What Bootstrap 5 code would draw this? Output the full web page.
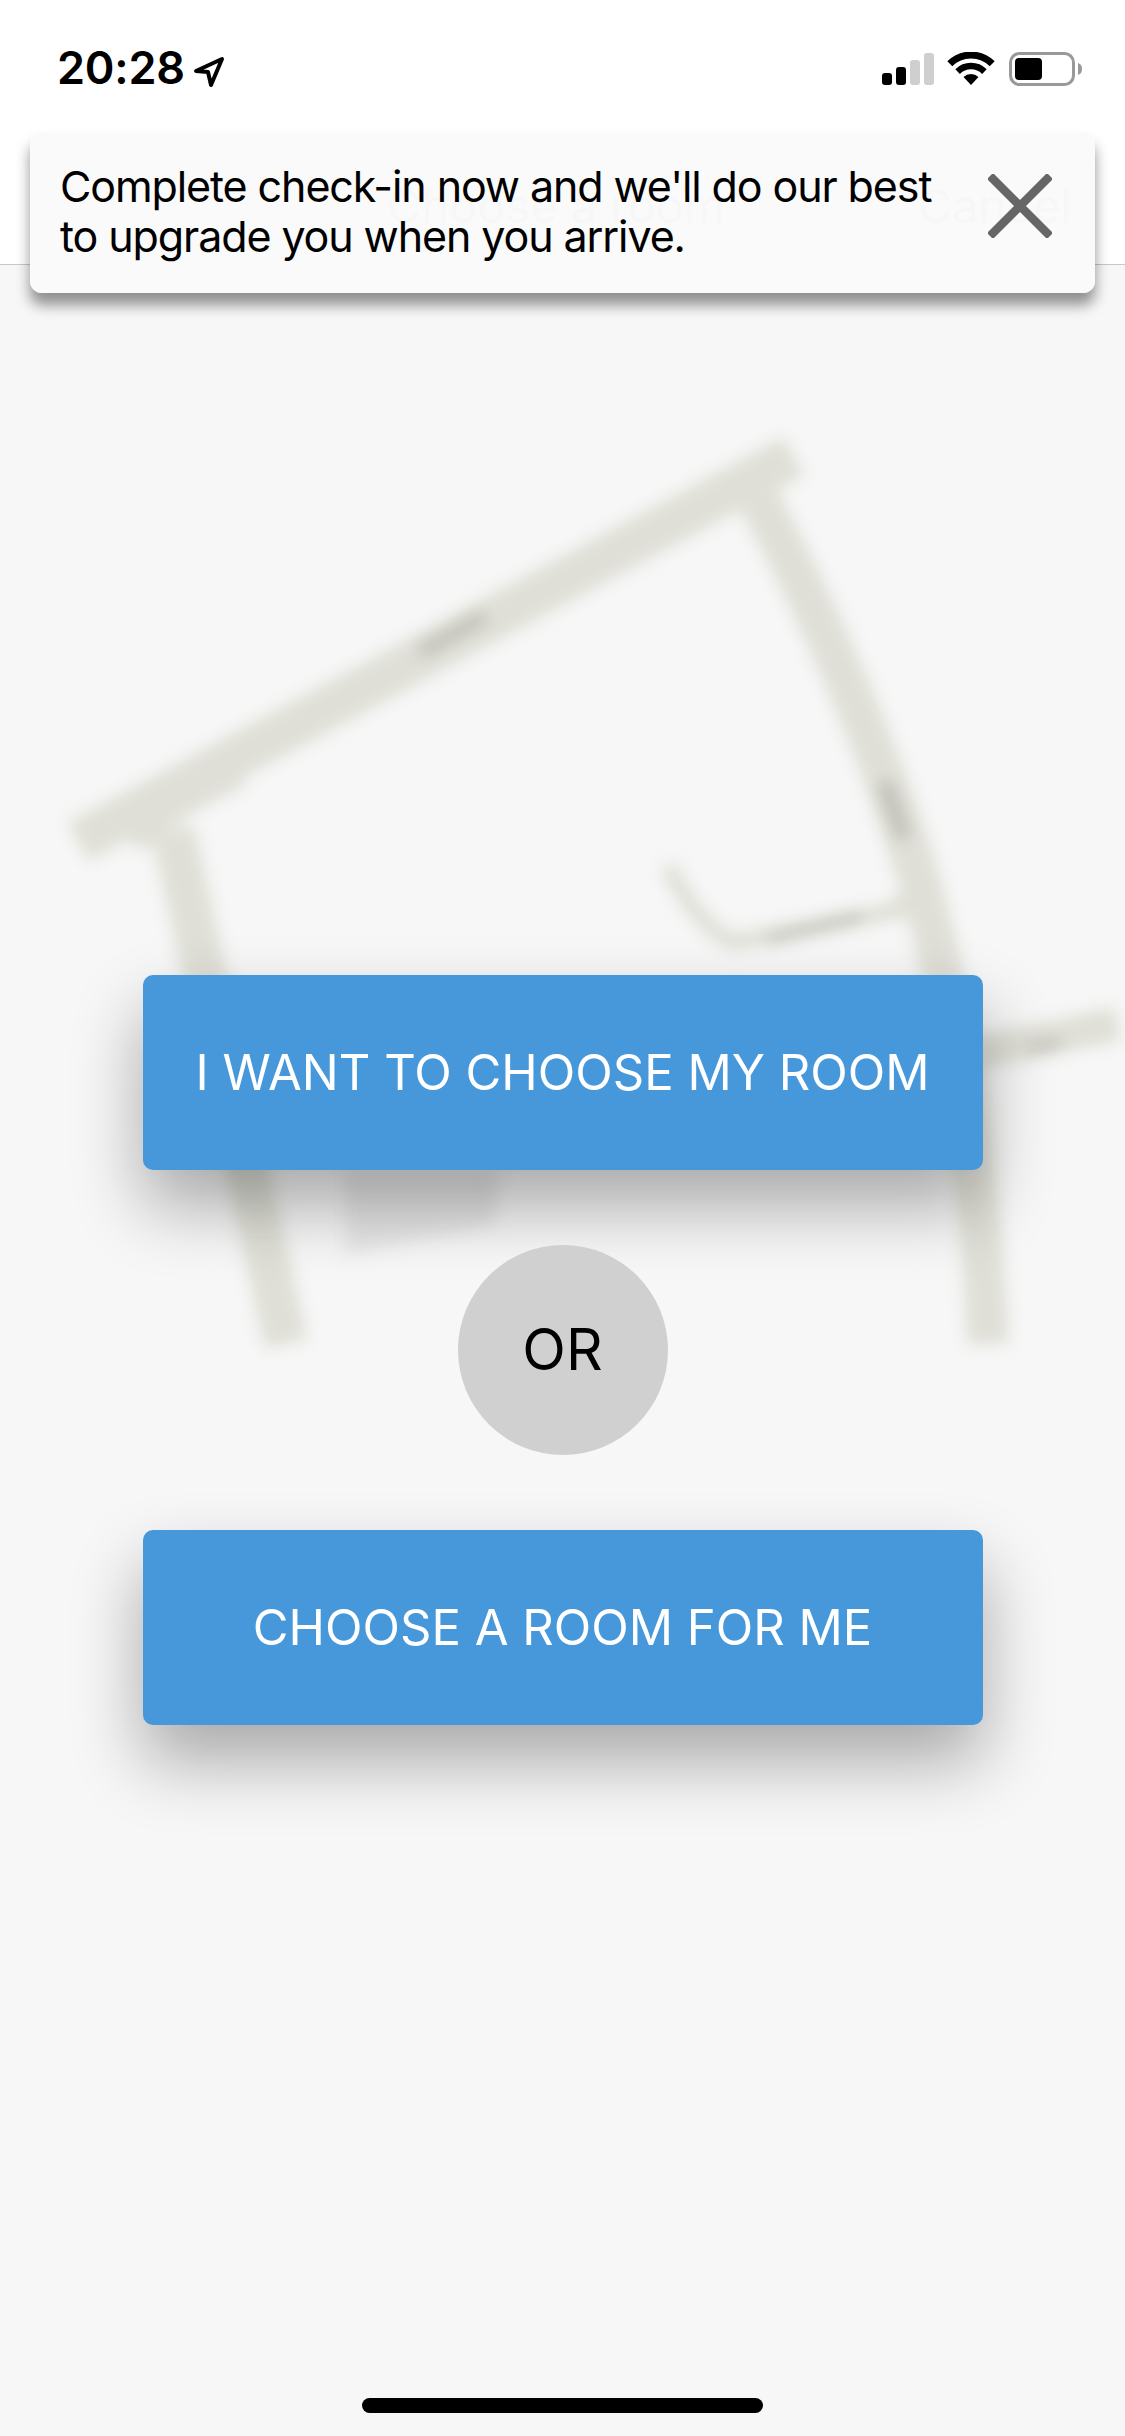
<!DOCTYPE html>
<html lang="en">
<head>
<meta charset="utf-8">
<title>Choose a room</title>
<link rel="stylesheet" href="https://cdn.jsdelivr.net/npm/bootstrap@5.3.0/dist/css/bootstrap.min.css">
<style>
html,body{margin:0;background:#f7f7f7;}
body{font-family:Inter,"Liberation Sans",sans-serif;color:#000;}
.phone{width:1125px;height:2436px;overflow:hidden;position:relative;background:#f7f7f7;}
.status-strip{height:132px;background:#fff;padding:52px 43px 0 57px;align-items:flex-start;}
.clock{font-size:45px;line-height:48px;font-weight:600;letter-spacing:-.2px;margin-top:-7px;}
.clock-row{margin-top:-1px;}
.nav-strip{height:133px;background:#fff;border-bottom:1px solid #c9c9c9;padding:46px 53px 0 387px;font-size:47px;line-height:56px;color:#9a9a9a;}
.floor{position:absolute;left:0;top:0;width:1125px;height:1500px;filter:blur(8px);}
.notice{position:absolute;left:30px;top:132px;width:1065px;height:161px;background:rgba(250,250,250,.97);border-radius:12px;box-shadow:0 12px 14px rgba(0,0,0,.42);padding:29px 43px 0 30px;z-index:5;}
.notice-text{font-size:43px;line-height:50px;margin:0;letter-spacing:-1.1px;white-space:nowrap;}
.notice-close{background:none;border:0;padding:0;width:64px;height:64px;margin-top:13px;line-height:0;}
.stage{position:relative;padding-top:710px;}
.pick{width:840px;height:195px;background:#4698da;border:0;border-radius:10px;color:#fff;font-size:49px;box-shadow:0 36px 70px rgba(0,0,0,.32);}
.pick:hover,.pick:active{background:#4698da;color:#fff;}
.or-disc{width:210px;height:210px;margin:75px 0 75px;background:#d0d0d0;font-size:57px;}
.home-bar{position:absolute;left:362px;top:2398px;width:401px;height:15px;background:#000;}
</style>
</head>
<body>
<div class="phone">
  <div class="d-flex justify-content-between status-strip">
    <div class="d-flex align-items-center gap-2 clock-row">
      <span class="clock">20:28</span>
      <svg width="32" height="32" viewBox="0 0 32 32"><path d="M3 15 L29 3 L18 29 L15 16 Z" fill="none" stroke="#000" stroke-width="4" stroke-linejoin="round"/></svg>
    </div>
    <div class="d-flex align-items-start">
      <svg width="200" height="36" viewBox="882 52 200 36">
        <rect x="882" y="73" width="10" height="12" rx="3" fill="#000"/>
        <rect x="896" y="67" width="10" height="18" rx="3" fill="#000"/>
        <rect x="910" y="60" width="10" height="25" rx="3" fill="#cfcfcf"/>
        <rect x="924" y="53" width="10" height="32" rx="3" fill="#cfcfcf"/>
        <g transform="translate(948,52)">
          <path d="M1.8 11.8 A30 30 0 0 1 44.2 11.8" fill="none" stroke="#000" stroke-width="7"/>
          <path d="M9.6 19.6 A19 19 0 0 1 36.4 19.6" fill="none" stroke="#000" stroke-width="6.5"/>
          <path d="M23 33 L15.5 25 A11 11 0 0 1 30.5 25 Z" fill="#000"/>
        </g>
        <rect x="1010.5" y="53.5" width="63" height="31" rx="9" fill="#fff" stroke="#999" stroke-width="3"/>
        <rect x="1015" y="58" width="27" height="22" rx="4" fill="#000"/>
        <path d="M1078 63 C1081 64 1082 66 1082 69 C1082 72 1081 74 1078 75 Z" fill="#999"/>
      </svg>
    </div>
  </div>
  <div class="d-flex justify-content-between nav-strip">
    <span>Choose a room</span>
    <span>Cancel</span>
  </div>

  <div class="notice d-flex justify-content-between align-items-start">
    <p class="notice-text">Complete check-in now and we'll do our best<br>to upgrade you when you arrive.</p>
    <button class="notice-close" type="button" aria-label="Close">
      <svg width="64" height="64" viewBox="0 0 64 64"><path d="M2 2 L62 62 M62 2 L2 62" stroke="#666" stroke-width="8.5" fill="none"/></svg>
    </button>
  </div>

  <svg class="floor" viewBox="0 0 1125 1500" aria-hidden="true">
    <g fill="none" stroke="#dfdfd7" stroke-linecap="butt">
      <path d="M78 842 L794 456" stroke-width="44"/>
      <path d="M754 490 Q866 700 922 890 Q975 1080 988 1344" stroke-width="42"/>
      <path d="M173 830 L286 1344" stroke-width="44"/>
      <path d="M668 866 Q700 930 735 942 L910 908" stroke-width="17"/>
      <path d="M960 1056 L1118 1024" stroke-width="34"/>
      <path d="M130 840 Q170 800 240 770" stroke-width="34"/>
      <path d="M925 860 Q925 900 880 915" stroke-width="18"/>
    </g>
    <g fill="none" stroke="#c0c0b8">
      <path d="M420 652 L485 616" stroke-width="14"/>
      <path d="M884 782 L904 838" stroke-width="16"/>
      <path d="M768 940 L862 916" stroke-width="10"/>
      <path d="M1028 1050 L1062 1042" stroke-width="10"/>
    </g>
    <path d="M345 1170 L500 1170 L495 1225 L345 1255 Z" fill="#e6e6e6"/>
  </svg>

  <main class="stage d-flex flex-column align-items-center">
    <button class="btn pick" type="button">I WANT TO CHOOSE MY ROOM</button>
    <div class="or-disc rounded-circle d-flex align-items-center justify-content-center">OR</div>
    <button class="btn pick" type="button">CHOOSE A ROOM FOR ME</button>
  </main>

  <div class="home-bar rounded-pill"></div>
</div>
<script src="https://cdn.jsdelivr.net/npm/bootstrap@5.3.0/dist/js/bootstrap.bundle.min.js"></script>
</body>
</html>
